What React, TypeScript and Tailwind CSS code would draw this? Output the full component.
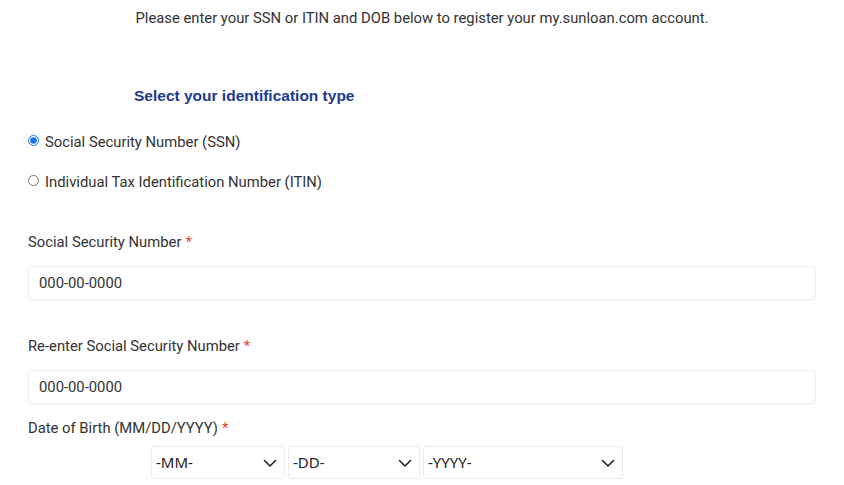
import React from "react";

const Chevron = () => (
  <svg width="16" height="16" viewBox="0 0 16 16" fill="none" className="shrink-0">
    <path d="M2.5 5.5 L8 11 L13.5 5.5" stroke="#222" strokeWidth="1.6" strokeLinecap="round" strokeLinejoin="round" />
  </svg>
);

const Req = () => <span className="text-[#e0462a] ml-[4px]">*</span>;

function Select({ label, w }: { label: string; w: string }) {
  return (
    <div
      className={`${w} h-[33px] flex items-center justify-between pl-[4px] pr-[6px] bg-white border border-[#ececec] rounded-[3px] text-[15px] text-[#222]`}
      style={{ fontFamily: '"Noto Sans", sans-serif' }}
    >
      <span>{label}</span>
      <Chevron />
    </div>
  );
}

export default function App() {
  return (
    <div
      className="w-[844px] h-[485px] bg-white overflow-hidden text-[#333]"
      style={{ fontFamily: 'Roboto, "Liberation Sans", sans-serif' }}
    >
      <div className="pt-[8px] text-center text-[14.8px] leading-[20px] text-[#333]">
        Please enter your SSN or ITIN and DOB below to register your my.sunloan.com account.
      </div>
      <div
        className="mt-[58px] ml-[134px] text-[15.5px] leading-[20px] font-bold text-[#1d3a8f]"
        style={{ fontFamily: '"Liberation Sans", Arial, sans-serif' }}
      >
        Select your identification type
      </div>
      <div className="mt-[26px] ml-[28px] flex flex-col gap-[20px]">
        <label className="flex items-start gap-[6px] text-[14.8px] leading-[20px]">
          <input type="radio" name="idt" defaultChecked className="w-[11px] h-[11px] mt-[3px] accent-[#1a73e8]" />
          <span>Social Security Number (SSN)</span>
        </label>
        <label className="flex items-start gap-[6px] text-[14.8px] leading-[20px]">
          <input type="radio" name="idt" className="w-[11px] h-[11px] mt-[3px]" />
          <span>Individual Tax Identification Number (ITIN)</span>
        </label>
      </div>
      <div className="mx-[28px] w-[788px]">
        <div className="mt-[40px] text-[14.8px] leading-[20px]">
          Social Security Number<Req />
        </div>
        <div className="mt-[14px] h-[34px] border border-[#ededed] rounded-[3px] shadow-[0_1px_1px_rgba(0,0,0,0.03)] flex items-center pl-[10px] text-[14.8px] text-[#333]">
          000-00-0000
        </div>
        <div className="mt-[36px] text-[14.8px] leading-[20px]">
          Re-enter Social Security Number<Req />
        </div>
        <div className="mt-[14px] h-[34px] border border-[#ededed] rounded-[3px] shadow-[0_1px_1px_rgba(0,0,0,0.03)] flex items-center pl-[10px] text-[14.8px] text-[#333]">
          000-00-0000
        </div>
        <div className="mt-[14px] text-[14.8px] leading-[20px]">
          Date of Birth (MM/DD/YYYY)<Req />
        </div>
        <div className="mt-[8px] ml-[123px] flex gap-[3px]">
          <Select label="-MM-" w="w-[134px]" />
          <Select label="-DD-" w="w-[132px]" />
          <Select label="-YYYY-" w="w-[200px]" />
        </div>
      </div>
    </div>
  );
}
